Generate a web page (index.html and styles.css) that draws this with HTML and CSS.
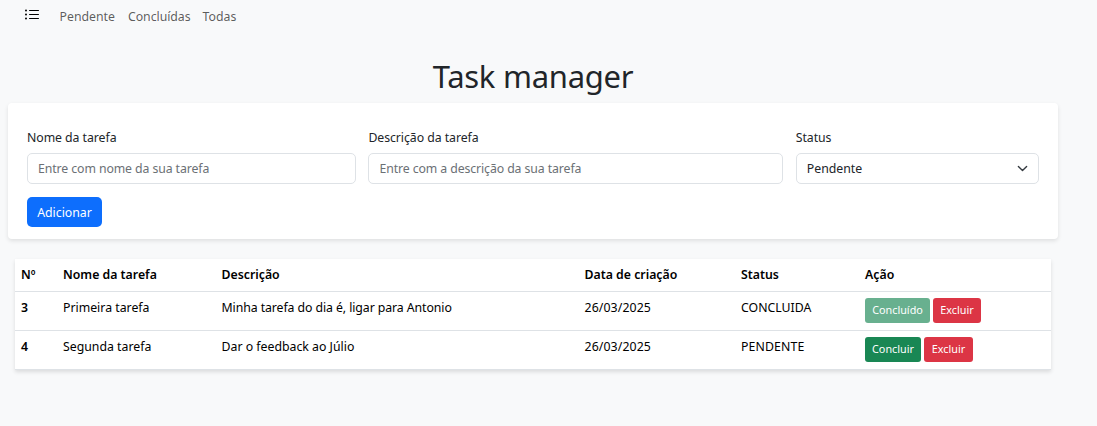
FILE: index.html
```html
<!DOCTYPE html>
<html lang="pt-BR">
<head>
<meta charset="utf-8">
<title>Task manager</title>
<link rel="stylesheet" href="styles.css">
</head>
<body>
<nav class="navbar">
  <svg class="brand" viewBox="0 0 16 16" fill="currentColor" aria-hidden="true"><path fill-rule="evenodd" d="M5 11.5a.5.5 0 0 1 .5-.5h9a.5.5 0 0 1 0 1h-9a.5.5 0 0 1-.5-.5m0-4a.5.5 0 0 1 .5-.5h9a.5.5 0 0 1 0 1h-9a.5.5 0 0 1-.5-.5m0-4a.5.5 0 0 1 .5-.5h9a.5.5 0 0 1 0 1h-9a.5.5 0 0 1-.5-.5m-3 1a1 1 0 1 0 0-2 1 1 0 0 0 0 2m0 4a1 1 0 1 0 0-2 1 1 0 0 0 0 2m0 4a1 1 0 1 0 0-2 1 1 0 0 0 0 2"/></svg>
  <a class="nav-link nav-pending">Pendente</a>
  <a class="nav-link nav-done">Concluídas</a>
  <a class="nav-link">Todas</a>
</nav>
<main class="page">
  <h1 class="title"><span>Task manager</span></h1>
  <form class="card">
    <div class="field"><label>Nome da tarefa</label><input class="control" placeholder="Entre com nome da sua tarefa"></div>
    <div class="field"><label>Descrição da tarefa</label><input class="control" placeholder="Entre com a descrição da sua tarefa"></div>
    <div class="field"><label>Status</label>
      <div class="control select"><span>Pendente</span><svg class="chevron" viewBox="0 0 16 16" fill="none" stroke="#343a40" stroke-width="2" stroke-linecap="round" stroke-linejoin="round"><path d="m2 5 6 6 6-6"/></svg></div>
    </div>
    <button class="btn add" type="button">Adicionar</button>
  </form>
  <table class="tasks">
    <colgroup><col class="c-num"><col class="c-name"><col class="c-desc"><col class="c-date"><col class="c-status"><col></colgroup>
    <thead><tr><th>Nº</th><th>Nome da tarefa</th><th>Descrição</th><th>Data de criação</th><th>Status</th><th>Ação</th></tr></thead>
    <tbody>
      <tr><th>3</th><td>Primeira tarefa</td><td class="desc">Minha tarefa do dia é, ligar para Antonio</td><td class="date">26/03/2025</td><td>CONCLUIDA</td><td><div class="actions"><button class="btn small success finished" type="button">Concluído</button><button class="btn small danger" type="button">Excluir</button></div></td></tr>
      <tr><th>4</th><td>Segunda tarefa</td><td>Dar o feedback ao Júlio</td><td class="date">26/03/2025</td><td class="pending">PENDENTE</td><td><div class="actions"><button class="btn small success open" type="button">Concluir</button><button class="btn small danger wide" type="button">Excluir</button></div></td></tr>
    </tbody>
  </table>
</main>
</body>
</html>
```
FILE: styles.css
```css
* { box-sizing: border-box; }
body {
  margin: 0;
  min-height: 426px;
  background: #f8f9fa;
  color: #212529;
  font: 12.3px/19px "Noto Sans", sans-serif;
}
.navbar { display: flex; align-items: center; height: 32px; padding-left: 24px; color: #000; }
.brand { width: 16px; height: 16px; margin: -3px 19.5px 0 0; }
.nav-link { color: rgba(0, 0, 0, .65); white-space: nowrap; }
.nav-pending { width: 68.5px; }
.nav-done { width: 74.5px; letter-spacing: -.05px; }
.page { width: 1066px; padding: 25px 8px 0; }
.title { margin: 0; height: 46px; text-align: center; font-size: 31px; font-weight: 400; line-height: 39px; letter-spacing: -.27px; }
.card {
  display: grid;
  grid-template-columns: 329px 415px 243px;
  column-gap: 12.4px;
  row-gap: 13px;
  width: 1050px;
  height: 136px;
  padding: 25px 19px 0;
  align-content: start;
  background: #fff;
  border-radius: 4px;
  box-shadow: 0 2px 4px rgba(0, 0, 0, .1);
}
.field { display: flex; flex-direction: column; gap: 6px; }
.field label { letter-spacing: -.06px; }
.control {
  width: 100%;
  height: 31px;
  padding: 0 10px;
  border: 1px solid #dee2e6;
  border-radius: 5px;
  background: #fff;
  color: #212529;
  font: inherit;
}
.control::placeholder { color: #6b7075; opacity: 1; letter-spacing: -.1px; }
.select { display: flex; align-items: center; justify-content: space-between; }
.chevron { width: 11px; height: 11px; }
.btn { border: 0; color: #fff; font: inherit; white-space: nowrap; padding: 0; }
.add { width: 75px; height: 30px; background: #0d6efd; border-radius: 5px; }
.tasks {
  width: 1036px;
  margin: 20px 0 0 7px;
  table-layout: fixed;
  border-collapse: collapse;
  background: #fff;
  color: #000;
  box-shadow: 0 2px 4px rgba(0, 0, 0, .12);
}
.c-num { width: 42px; }
.c-name { width: 158.5px; }
.c-desc { width: 363px; }
.c-date { width: 156.5px; }
.c-status { width: 124px; }
.tasks th, .tasks td { padding: 6px 6px 0; text-align: left; vertical-align: top; border-bottom: 1px solid #dee2e6; white-space: nowrap; }
.tasks thead tr { height: 32px; }
.tasks tbody tr { height: 39px; }
.tasks th { font-weight: 600; }
.tasks .desc { letter-spacing: -.08px; }
.tasks .date { letter-spacing: .1px; }
.tasks .pending { letter-spacing: .12px; }
.actions { display: flex; gap: 3px; }
.small { height: 25px; padding-bottom: 1px; border-radius: 3px; font-size: 10.8px; }
.success { background: #198754; }
.danger { width: 48px; background: #dc3545; }
.danger.wide { width: 49px; }
.finished { width: 65px; opacity: .65; }
.open { width: 56px; }
```
